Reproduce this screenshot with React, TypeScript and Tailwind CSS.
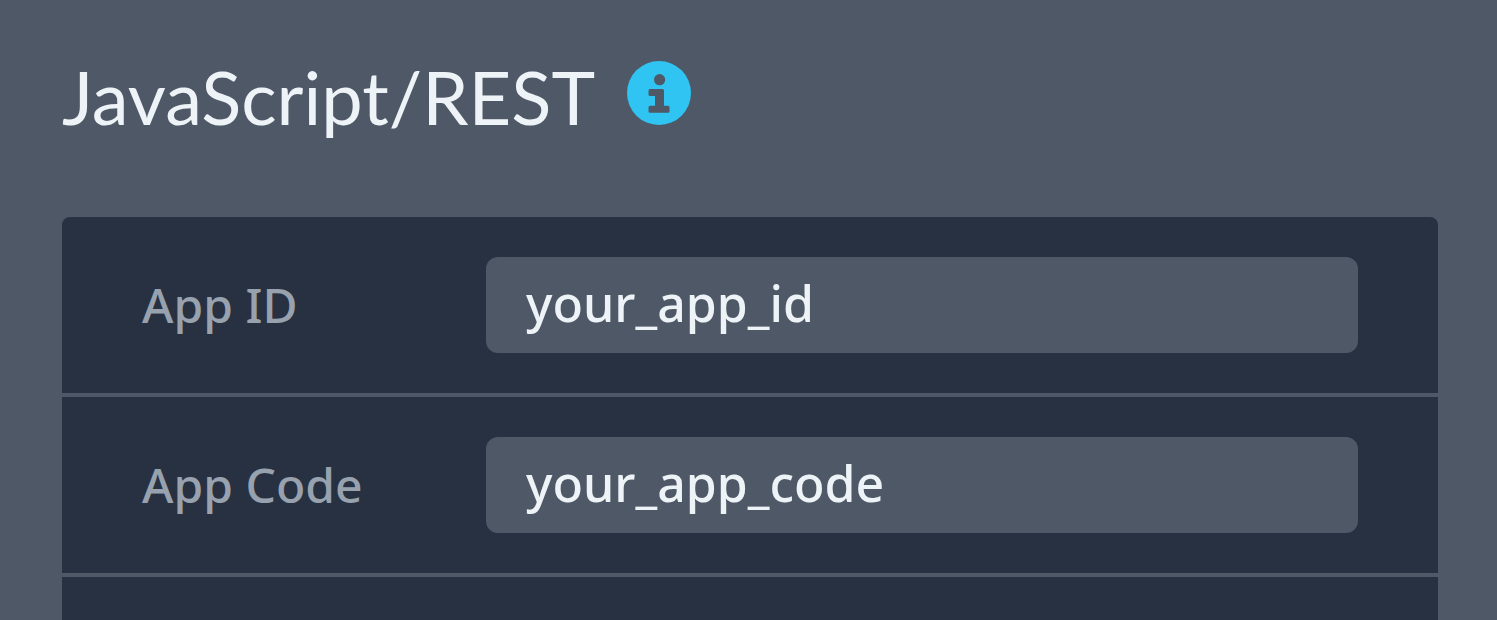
const fields = [
  { id: "app-id", label: "App ID", value: "your_app_id" },
  { id: "app-code", label: "App Code", value: "your_app_code" },
];

function InfoIcon() {
  return (
    <svg viewBox="0 0 64 64" className="size-16" aria-hidden="true">
      <circle cx="32" cy="32" r="32" fill="#30c4f2" />
      <g fill="#4f5866">
        <circle cx="32.6" cy="18.7" r="5.6" />
        <path d="M23 28h12.500a1.500 1.500 0 0 1 1.500 1.500V44.700h4a1.500 1.500 0 0 1 1.500 1.500v4a1.500 1.500 0 0 1-1.500 1.500H23a1.500 1.500 0 0 1-1.500-1.500v-4a1.500 1.500 0 0 1 1.500-1.500h5V35h-5a1.500 1.500 0 0 1-1.500-1.500v-4A1.500 1.500 0 0 1 23 28z" />
      </g>
    </svg>
  );
}

export default function App() {
  return (
    <main className="h-screen overflow-hidden bg-[#4f5866] pt-11 pr-[59px] pl-[62px] font-['Noto_Sans',sans-serif]">
      <header className="flex items-center gap-8">
        <h1 className="pt-2 font-['Lato',sans-serif] text-[74px] leading-[90px] font-normal text-[#edf3f6]">JavaScript/REST</h1>
        <button type="button" aria-label="About JavaScript/REST credentials" className="size-16 rounded-full">
          <InfoIcon />
        </button>
      </header>
      <form className="mt-[75px] rounded-t-lg bg-[#273142]">
        {fields.map((field) => (
          <div key={field.id} className="flex items-center border-b-4 border-[#4f5866] px-20 py-10">
            <label htmlFor={field.id} className="w-[344px] shrink-0 text-[48px] leading-[64px] font-medium text-[#98a2af]">
              {field.label}
            </label>
            <input
              id={field.id}
              defaultValue={field.value}
              className="h-24 min-w-0 flex-1 rounded-xl bg-[#4f5866] px-10 pb-1 text-[50px] font-medium text-[#edf3f6]"
            />
          </div>
        ))}
        <div className="h-24" />
      </form>
    </main>
  );
}
